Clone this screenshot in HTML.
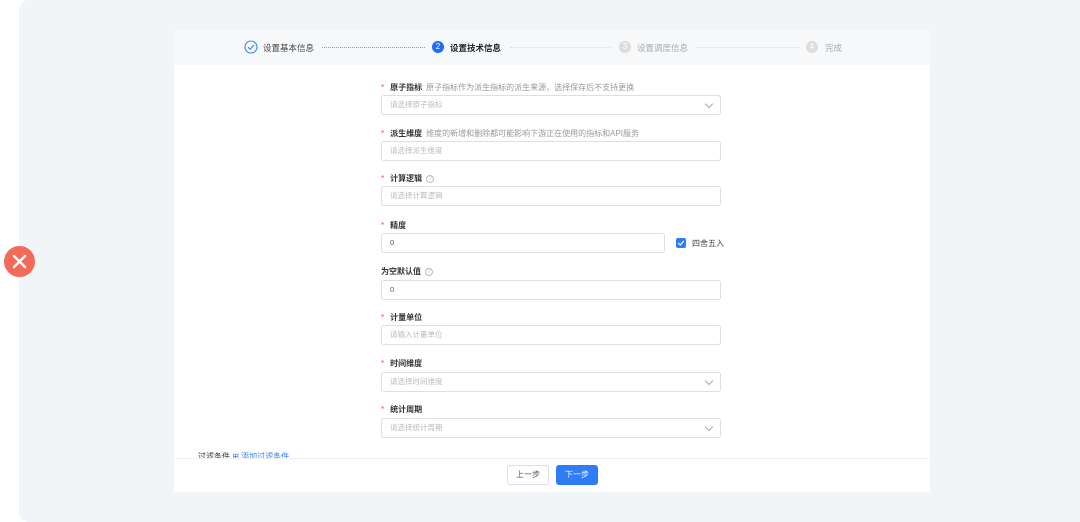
<!DOCTYPE html><html><head><meta charset="utf-8"><style>
*{margin:0;padding:0;box-sizing:border-box}
body{width:1080px;height:522px;background:#fff;position:relative;overflow:hidden;font-family:"Liberation Sans","Noto Sans CJK SC",sans-serif;font-size:8px;color:#333}
.panel{position:absolute;left:19px;top:0;width:1075px;height:522px;background:#f1f5f8;border-radius:10px}
.card{position:absolute;left:174px;top:30px;width:756px;height:462px;background:#fff}
.hdr{position:absolute;left:174px;top:30px;width:756px;height:35px;background:#f7f8fa}
.a{position:absolute}
.lbl{position:absolute;left:381px;font-size:8px;color:#333;font-weight:bold}
.lbl .s{color:#f5503c;margin-right:6px;font-weight:normal}
.lbl .h{color:#999;font-weight:normal;margin-left:4px}
.in{position:absolute;left:381px;width:340px;height:20px;border:1px solid #dcdfe6;border-radius:3px;font-size:7.5px;color:#bbb;padding-left:8px;line-height:18px}
.in.v{color:#555}
.dd:after{content:"";position:absolute;right:8px;top:5px;width:5px;height:5px;border-right:1px solid #aaa;border-bottom:1px solid #aaa;transform:rotate(45deg)}
.q{display:inline-block;width:8px;height:8px;border:1px solid #bbb;border-radius:50%;font-size:6px;line-height:6px;text-align:center;color:#bbb;font-weight:normal;margin-left:4px;vertical-align:1px}
.st{position:absolute;top:42px;font-size:8.5px;color:#444}
.c{position:absolute;top:41px;width:12px;height:12px;border-radius:50%;font-size:8px;line-height:12px;text-align:center;color:#fff}
</style></head><body>
<div class="panel"></div>
<div class="card"></div><div class="hdr"></div>
<div class="a" style="left:4px;top:246px;width:31px;height:31px;border-radius:50%;background:#f26a5a"></div>
<svg class="a" style="left:11px;top:253px" width="17" height="17"><path d="M3 3L14 14M14 3L3 14" stroke="#fff" stroke-width="2.4" stroke-linecap="round"/></svg>
<svg class="a" style="left:244px;top:40px" width="14" height="14"><circle cx="7" cy="7" r="6" fill="none" stroke="#3c82f6" stroke-width="1.1"/><path d="M4 7.2L6.2 9.2L10 5" fill="none" stroke="#3c82f6" stroke-width="1.1"/></svg>
<div class="st" style="left:263px">设置基本信息</div>
<div class="a" style="left:322px;top:47px;width:103px;border-top:1px dotted #6aa0f7"></div>
<div class="c" style="left:432px;background:#1f6ff5">2</div>
<div class="st" style="left:450px;color:#222;font-weight:bold">设置技术信息</div>
<div class="a" style="left:510px;top:47px;width:102px;border-top:1px dotted #ddd"></div>
<div class="c" style="left:619px;background:#ddd">3</div>
<div class="st" style="left:637px;color:#aaa">设置调度信息</div>
<div class="a" style="left:697px;top:47px;width:103px;border-top:1px dotted #ddd"></div>
<div class="c" style="left:806px;background:#ddd">4</div>
<div class="st" style="left:825px;color:#aaa">完成</div>

<div class="lbl" style="top:82px"><span class="s">*</span>原子指标<span class="h">原子指标作为派生指标的派生来源，选择保存后不支持更换</span></div>
<div class="in dd" style="top:95px">请选择原子指标</div>
<div class="lbl" style="top:128px"><span class="s">*</span>派生维度<span class="h">维度的新增和删除都可能影响下游正在使用的指标和API服务</span></div>
<div class="in" style="top:141px">请选择派生维度</div>
<div class="lbl" style="top:173px"><span class="s">*</span>计算逻辑<span class="q">?</span></div>
<div class="in" style="top:186px">请选择计算逻辑</div>
<div class="lbl" style="top:220px"><span class="s">*</span>精度</div>
<div class="in v" style="top:233px;width:284px">0</div>
<div class="a" style="left:676px;top:238px;width:10px;height:10px;background:#2f7cf6;border-radius:2px"></div>
<svg class="a" style="left:676px;top:238px" width="10" height="10"><path d="M2.2 5L4.3 7L7.8 3" fill="none" stroke="#fff" stroke-width="1.2"/></svg>
<div class="a" style="left:692px;top:238px;font-size:8px;color:#444">四舍五入</div>
<div class="lbl" style="top:266px">为空默认值<span class="q">?</span></div>
<div class="in v" style="top:280px">0</div>
<div class="lbl" style="top:312px"><span class="s">*</span>计量单位</div>
<div class="in" style="top:325px">请输入计量单位</div>
<div class="lbl" style="top:358px"><span class="s">*</span>时间维度</div>
<div class="in dd" style="top:372px">请选择时间维度</div>
<div class="lbl" style="top:404px"><span class="s">*</span>统计周期</div>
<div class="in dd" style="top:418px">请选择统计周期</div>
<div class="a" style="left:198px;top:452px;font-size:8px;color:#333;height:6px;overflow:hidden;line-height:10px">过滤条件 <span style="color:#2f7cf6">⊞ 添加过滤条件</span></div>
<div class="a" style="left:174px;top:458px;width:756px;height:34px;background:#fff;border-top:1px solid #eef0f3"></div>
<div class="a" style="left:507px;top:465px;width:42px;height:20px;border:1px solid #dcdfe6;border-radius:3px;font-size:8px;line-height:18px;text-align:center;color:#555">上一步</div>
<div class="a" style="left:556px;top:465px;width:42px;height:20px;background:#2f7cf6;border-radius:3px;font-size:8px;line-height:20px;text-align:center;color:#fff">下一步</div>
</body></html>
